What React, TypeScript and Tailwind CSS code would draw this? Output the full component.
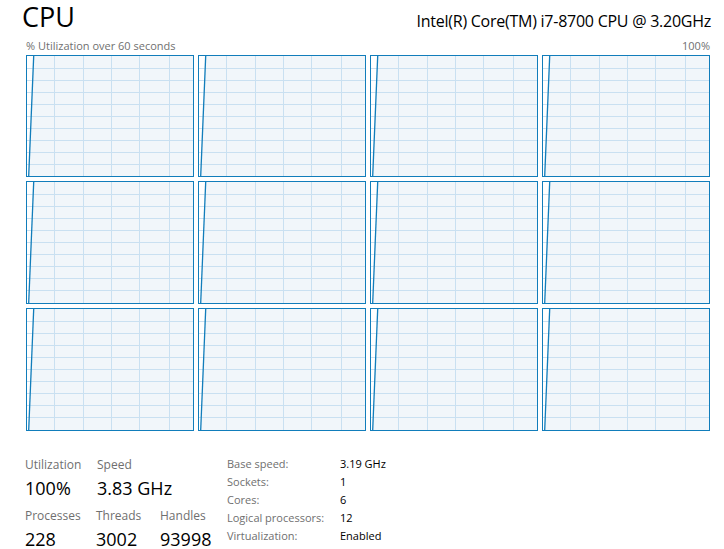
import React from "react";

const V_LINES = [27, 56, 84, 112, 142];

function Graph({ h }: { h: number }) {
  const inner = h - 2;
  const hLines: number[] = [];
  for (let y = 12; y < inner - 4; y += 12) hLines.push(y);
  return (
    <div className="w-[168px] h-full border border-[#117dbb] bg-white">
      <svg width="166" height={inner} className="block" shapeRendering="crispEdges">
        <polygon points={`1.7,${inner} 6.7,0 166,0 166,${inner}`} fill="#f1f6fa" shapeRendering="geometricPrecision" />
        {hLines.map((y) => (
          <rect key={"h" + y} x={0} y={y} width={166} height={1} fill="#c9e0f1" />
        ))}
        {V_LINES.map((x) => (
          <rect key={"v" + x} x={x} y={0} width={1} height={inner} fill="#c9e0f1" />
        ))}
        <line x1={1.7} y1={inner} x2={6.7} y2={0} stroke="#117dbb" strokeWidth={1.3} shapeRendering="geometricPrecision" />
      </svg>
    </div>
  );
}

function Stat({ label, value, w }: { label: string; value: string; w: string }) {
  return (
    <div className={w}>
      <div className="text-[12px] leading-[16px] text-[#6f6f6f]">{label}</div>
      <div className="mt-[5px] text-[18px] leading-[20px] text-black">{value}</div>
    </div>
  );
}

export default function App() {
  const rows: [string, string][] = [
    ["Base speed:", "3.19 GHz"],
    ["Sockets:", "1"],
    ["Cores:", "6"],
    ["Logical processors:", "12"],
    ["Virtualization:", "Enabled"],
  ];
  const heights = [122, 123, 123];
  return (
    <div className="w-[724px] h-[549px] bg-white overflow-hidden font-['Open_Sans',sans-serif] text-black">
      <div className="flex items-baseline justify-between pl-[22px] pr-[13px] pt-[1px]">
        <div className="text-[27px] leading-[32px]">CPU</div>
        <div className="text-[16px] leading-[22px] tracking-[-0.25px]">Intel(R) Core(TM) i7-8700 CPU @ 3.20GHz</div>
      </div>
      <div className="mt-[6px] flex justify-between pl-[26px] pr-[14px] text-[11px] leading-[14px] text-[#707070]">
        <span>% Utilization over 60 seconds</span>
        <span>100%</span>
      </div>
      <div className="mt-[2px] ml-[26px] grid grid-cols-[repeat(4,168px)] grid-rows-[122px_123px_123px] gap-x-[4px] gap-y-[4px]">
        {Array.from({ length: 12 }).map((_, i) => (
          <Graph key={i} h={heights[Math.floor(i / 4)]} />
        ))}
      </div>
      <div className="mt-[26px] flex">
        <div className="pl-[25px] w-[227px]">
          <div className="flex">
            <Stat label="Utilization" value="100%" w="w-[72px]" />
            <Stat label="Speed" value="3.83 GHz" w="w-[100px]" />
          </div>
          <div className="mt-[10px] flex">
            <Stat label="Processes" value="228" w="w-[71px]" />
            <Stat label="Threads" value="3002" w="w-[64px]" />
            <Stat label="Handles" value="93998" w="w-[60px]" />
          </div>
        </div>
        <div className="-mt-[2px] text-[11px] leading-[18px]">
          {rows.map(([k, v]) => (
            <div key={k} className="flex">
              <span className="w-[113px] text-[#6f6f6f]">{k}</span>
              <span className="text-black">{v}</span>
            </div>
          ))}
        </div>
      </div>
    </div>
  );
}
